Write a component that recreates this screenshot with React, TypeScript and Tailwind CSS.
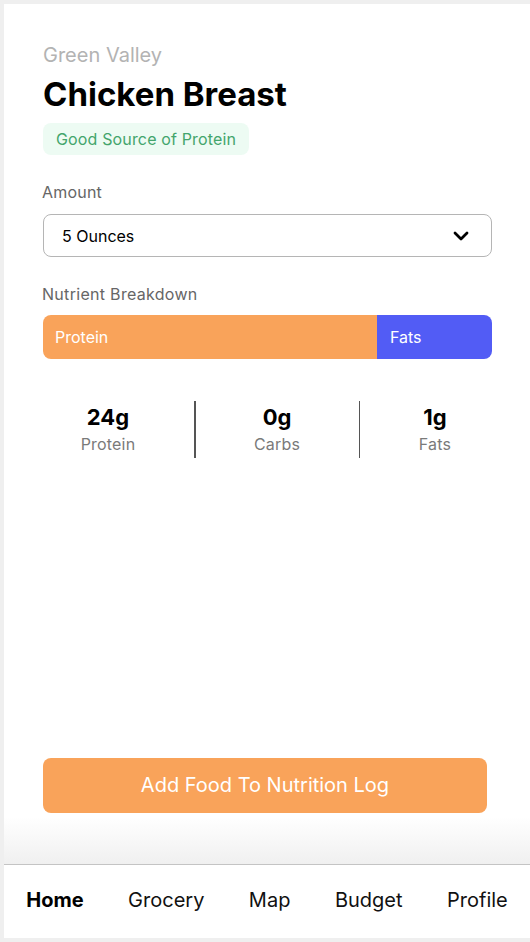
import React from "react";

export default function App() {
  return (
    <div
      className="w-[530px] h-[942px] bg-[#efefef] pt-1 pl-1 pb-1 flex"
      style={{ fontFamily: "Inter, 'Noto Sans', sans-serif" }}
    >
      <div className="flex-1 min-w-0 bg-white flex flex-col">
        <div className="pl-[39px] pr-[38px] pt-[36px] flex flex-col">
          <div className="text-[20px] leading-[30px] text-[#b3b3b3]">Green Valley</div>
          <div className="mt-[4px] text-[33px] leading-[40px] font-bold text-black">
            Chicken Breast
          </div>
          <div className="mt-[9px] self-start h-[32px] px-[13px] flex items-center rounded-[8px] bg-[#edfbf3] text-[#43a56c] text-[16px] tracking-[0.15px]">
            Good Source of Protein
          </div>
          <div className="mt-[25px] text-[16px] leading-[24px] text-[#666666] -ml-[1px] tracking-[0.2px]">Amount</div>
          <div className="mt-[10px] h-[43px] border-[1.5px] border-[#b5b5b5] rounded-[8px] flex items-center justify-between pl-[18px] pr-[22px]">
            <span className="text-[16px] text-black">5 Ounces</span>
            <svg width="16" height="10" viewBox="0 0 16 10" fill="none">
              <path d="M2 2l6 6 6-6" stroke="#000" strokeWidth="2.8" strokeLinecap="round" strokeLinejoin="round" />
            </svg>
          </div>
          <div className="mt-[25px] text-[16px] leading-[24px] text-[#666666] -ml-[1px] tracking-[0.3px]">Nutrient Breakdown</div>
          <div className="mt-[9px] h-[44px] flex rounded-[8px] overflow-hidden text-white text-[16px]">
            <div className="w-[334px] shrink-0 bg-[#f9a35a] flex items-center pl-[12px]">Protein</div>
            <div className="flex-1 bg-[#525cf5] flex items-center pl-[13px]">Fats</div>
          </div>
          <div className="mt-[42px] flex h-[57px]">
            <div className="w-[130px] shrink-0 flex flex-col items-center pt-[2px]">
              <span className="text-[22px] leading-[28px] font-bold text-black">24g</span>
              <span className="mt-[3px] text-[16px] leading-[20px] text-[#7a7a7a] tracking-[0.2px]">Protein</span>
            </div>
            <div className="ml-[21px] w-[1.5px] shrink-0 bg-[#555555]" />
            <div className="w-[163px] shrink-0 flex flex-col items-center pt-[2px]">
              <span className="text-[22px] leading-[28px] font-bold text-black">0g</span>
              <span className="mt-[3px] text-[16px] leading-[20px] text-[#7a7a7a] tracking-[0.2px]">Carbs</span>
            </div>
            <div className="w-[1.5px] shrink-0 bg-[#555555]" />
            <div className="flex-1 min-w-0 flex flex-col items-center pt-[2px] pl-[18px]">
              <span className="text-[22px] leading-[28px] font-bold text-black">1g</span>
              <span className="mt-[3px] text-[16px] leading-[20px] text-[#7a7a7a] tracking-[0.2px]">Fats</span>
            </div>
          </div>
        </div>
        <div className="mt-auto pl-[39px] pr-[43px]">
          <button className="w-full h-[55px] rounded-[8px] bg-[#f9a35a] text-white text-[20px] flex items-center justify-center">
            Add Food To Nutrition Log
          </button>
        </div>
        <div className="mt-[4px] h-[47px] bg-gradient-to-b from-white to-[#f0f0f0]" />
        <div className="h-[1.5px] bg-[#c4c4c4]" />
        <div className="h-[73px] flex items-center justify-around text-[20px] text-[#111111] pb-[4px]">
          <span className="font-bold text-black">Home</span>
          <span>Grocery</span>
          <span>Map</span>
          <span>Budget</span>
          <span>Profile</span>
        </div>
      </div>
    </div>
  );
}
